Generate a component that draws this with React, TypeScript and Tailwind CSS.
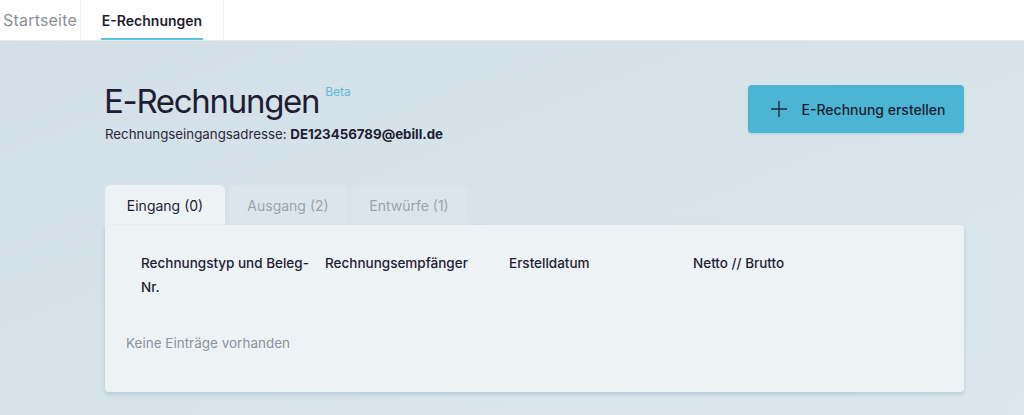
import React from "react";

export default function App() {
  const font = { fontFamily: "Inter, 'Noto Sans', 'Liberation Sans', sans-serif" };
  return (
    <div style={font} className="w-[1024px] h-[415px] overflow-hidden flex flex-col bg-gradient-to-br from-[#d2dfe7] via-[#d6e4ea] to-[#dbe7ec]">
      <nav className="h-[41px] bg-white flex items-stretch shrink-0 border-b border-[#e4ebef]">
        <div className="w-[80px] flex items-center pl-[3px] text-[16px] tracking-[0.2px] text-[#8a8f98]">Startseite</div>
        <div className="w-[144px] border-x border-[#eef1f3] flex justify-center">
          <div className="relative flex items-center text-[14px] font-semibold text-[#1f1d33] px-[1px]">
            E-Rechnungen
            <span className="absolute left-0 right-0 bottom-0 h-[2px] bg-[#5cc3de]" />
          </div>
        </div>
      </nav>
      <main className="ml-[105px] w-[859px] flex flex-col">
        <div className="flex justify-between pt-[38px]">
          <div className="flex flex-col">
            <div className="flex items-start">
              <h1 className="text-[33px] leading-[44px] font-normal text-[#1f1d33] tracking-[-1.3px] -ml-[1px]">E-Rechnungen</h1>
              <span className="ml-[6px] mt-[4px] text-[12px] text-[#5cbcd9]">Beta</span>
            </div>
            <div className="text-[13.3px] leading-[20px] text-[#2a2838] mt-[1px]">
              Rechnungseingangsadresse: <span className="font-bold text-[#1f1d33]">DE123456789@ebill.de</span>
            </div>
          </div>
          <button className="mt-[6px] w-[216px] h-[48px] rounded-[4px] bg-[#4bb5d3] flex items-center justify-center gap-[13px] pl-[2px] text-[14px] font-medium text-[#1f1d33] shadow-sm">
            <svg width="20" height="20" viewBox="0 0 20 20" fill="none" stroke="#2a2838" strokeWidth="1.4">
              <path d="M10 2v16M2 10h16" />
            </svg>
            E-Rechnung erstellen
          </button>
        </div>
        <div className="flex gap-[4px] mt-[41px]">
          <div className="w-[120px] h-[40px] rounded-t-[6px] bg-[#edf2f5] flex items-center justify-center text-[14px] text-[#1f1d33]">Eingang (0)</div>
          <div className="w-[118px] h-[40px] rounded-t-[6px] bg-[#dbe6ec] flex items-center justify-center text-[14px] text-[#9ba3ab]">Ausgang (2)</div>
          <div className="w-[116px] h-[40px] rounded-t-[6px] bg-[#dbe6ec] flex items-center justify-center text-[14px] text-[#9ba3ab]">Entwürfe (1)</div>
        </div>
        <div className="h-[167px] bg-[#edf2f5] rounded-b-[4px] rounded-tr-[4px] shadow-[0_2px_4px_rgba(120,150,170,0.35)] flex flex-col">
          <div className="grid grid-cols-[184px_184px_184px_184px] pl-[36px] pt-[26px] text-[13.5px] leading-[24px] font-medium text-[#1f1d33]">
            <div>Rechnungstyp und Beleg-Nr.</div>
            <div>Rechnungsempfänger</div>
            <div>Erstelldatum</div>
            <div>Netto // Brutto</div>
          </div>
          <div className="pl-[21px] mt-[34px] text-[13.5px] leading-[20px] text-[#8d939b]">Keine Einträge vorhanden</div>
        </div>
      </main>
    </div>
  );
}
